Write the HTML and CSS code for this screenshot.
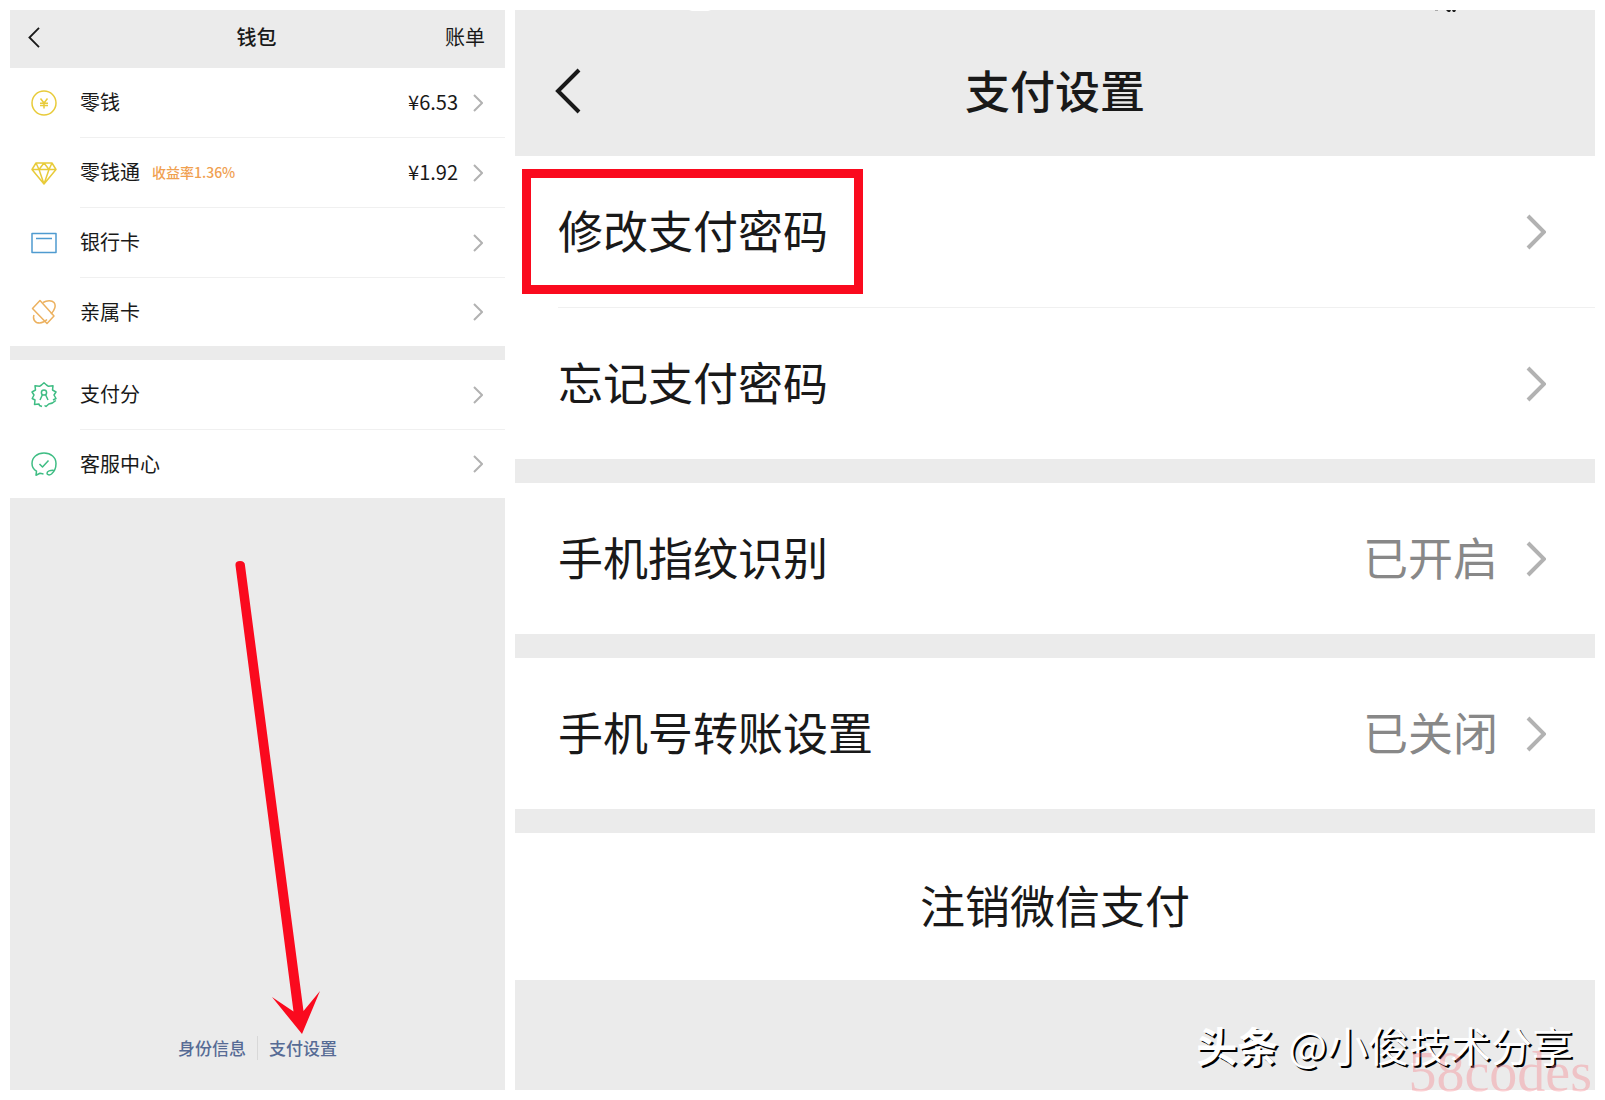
FILE: index.html
```html
<!doctype html>
<html lang="zh-CN">
  <head>
    <meta charset="UTF-8" />
    <meta name="viewport" content="width=device-width, initial-scale=1.0" />
    <title>支付设置</title>
    <link rel="stylesheet" href="styles.css">
  </head>
  <body>
    <svg class="defs" aria-hidden="true">
      <symbol id="chevron" viewBox="0 0 20 36">
        <path d="M2 2l16 16L2 34" fill="none" stroke="currentColor" stroke-width="4" />
      </symbol>
      <symbol id="back" viewBox="0 0 26 46">
        <path d="M24 2L3 23l21 21" fill="none" stroke="currentColor" stroke-width="4" />
      </symbol>
    </svg>

    <main class="screens">
      <section class="screen wallet">
        <header class="bar">
          <button class="back" aria-label="返回"><svg><use href="#back" /></svg></button>
          <h1>钱包</h1>
          <a class="bill" href="#bill">账单</a>
        </header>

        <ul class="group">
          <li>
            <a class="row" href="#balance">
              <svg class="icon yellow" viewBox="0 0 26 26">
                <circle cx="13" cy="13" r="12" />
                <path d="M9.500 8.500l3.500 4.500 3.500-4.500M9 13.200h8M9 15.500h8M13 13v5.500" />
              </svg>
              <span class="body">
                <span class="label">零钱</span>
                <span class="value">¥6.53</span>
                <svg class="chevron"><use href="#chevron" /></svg>
              </span>
            </a>
          </li>
          <li>
            <a class="row" href="#fund">
              <svg class="icon yellow" viewBox="0 0 26 26">
                <path d="M5 3h16l4 6.500L13 24 1 9.500zM1 9.500h24M8 9.500L13 24l5-14.500M5 3l3 6.500L13 3l5 6.500L21 3" />
              </svg>
              <span class="body">
                <span class="label">零钱通</span>
                <span class="rate">收益率1.36%</span>
                <span class="value">¥1.92</span>
                <svg class="chevron"><use href="#chevron" /></svg>
              </span>
            </a>
          </li>
          <li>
            <a class="row" href="#cards">
              <svg class="icon blue" viewBox="0 0 26 26">
                <path d="M1 3.500h24v19H1zM5 8.500h16" />
              </svg>
              <span class="body">
                <span class="label">银行卡</span>
                <svg class="chevron"><use href="#chevron" /></svg>
              </span>
            </a>
          </li>
          <li>
            <a class="row" href="#family">
              <svg class="icon orange" viewBox="0 0 26 26">
                <path d="M9 1.500L23 17l-7 7.500L1.500 9.500z" />
                <path d="M12 3.500c4-2.500 9-2.300 11 0 2.500 3 .5 8-3 11.500M3 16c-1 3 0 6 2.500 7.500 3 1 7 .5 10.500-3" />
              </svg>
              <span class="body">
                <span class="label">亲属卡</span>
                <svg class="chevron"><use href="#chevron" /></svg>
              </span>
            </a>
          </li>
        </ul>

        <ul class="group">
          <li>
            <a class="row" href="#score">
              <svg class="icon green" viewBox="0 0 26 26">
                <path d="M11 24.500l-2.500-1-.5-1.500-4.500.5.500-4.500-2.800-1.500L3 13 1 10l3.500-2L4 3.800l4.500.5L10.500 3 13 .8 15.500 3l2 1.300 4.500-.5-.5 4.200 3.500 2-2 3 2 3.500-3 1.500" />
                <path d="M24.800 18.500c-2 2-4.500 3.300-7 3.500L15 24.500l-1.500-1" />
                <circle cx="13" cy="10.500" r="2.600" />
                <path d="M11.500 12.500l-2.500 5.500M14.500 12.500l2.500 5.500" />
              </svg>
              <span class="body">
                <span class="label">支付分</span>
                <svg class="chevron"><use href="#chevron" /></svg>
              </span>
            </a>
          </li>
          <li>
            <a class="row" href="#service">
              <svg class="icon green" viewBox="0 0 26 26">
                <path d="M12.500 23l-3.500-.7L5 24.200l.5-4C2.500 18.500 1 15.500 1 12.500 1 6.500 6 2 13 2s12 4.500 12 10.500c0 5-1.500 8-4.500 10.500-2 1.500-4.500 1-4.500-.8 0-2 3.500-3.200 6.500-3" />
                <path d="M8.500 13l3 3 6-6.500" />
              </svg>
              <span class="body">
                <span class="label">客服中心</span>
                <svg class="chevron"><use href="#chevron" /></svg>
              </span>
            </a>
          </li>
        </ul>

        <footer class="links">
          <a href="#identity">身份信息</a>
          <a href="#settings">支付设置</a>
          <!-- points at the settings link -->
          <svg class="arrow" viewBox="0 0 100 474" aria-hidden="true">
            <path d="M15.500 5.500Q15 1 20 1t5 4.500L83.500 451l16.500-20L82 474 52 437l21.500 14.500z" />
          </svg>
        </footer>
      </section>

      <section class="screen settings">
        <svg class="status" viewBox="0 0 770 2" aria-hidden="true">
          <path d="M2 0h22l-3 1H5z" fill="#fff" />
          <path d="M748 0h3v1h-3z" fill="#aaa" />
          <path d="M759 0h5l-1 2h-2zM765 0h4l-1 2h-2z" fill="#222" />
        </svg>
        <header class="bar">
          <button class="back" aria-label="返回"><svg><use href="#back" /></svg></button>
          <h2>支付设置</h2>
        </header>

        <ul class="group">
          <li>
            <a class="row" href="#change-password">
              <span class="body">
                <span class="label marked">修改支付密码</span>
                <svg class="chevron"><use href="#chevron" /></svg>
              </span>
            </a>
          </li>
          <li>
            <a class="row" href="#forgot-password">
              <span class="body">
                <span class="label">忘记支付密码</span>
                <svg class="chevron"><use href="#chevron" /></svg>
              </span>
            </a>
          </li>
        </ul>

        <ul class="group">
          <li>
            <a class="row" href="#fingerprint">
              <span class="body">
                <span class="label">手机指纹识别</span>
                <span class="value">已开启</span>
                <svg class="chevron"><use href="#chevron" /></svg>
              </span>
            </a>
          </li>
        </ul>

        <ul class="group">
          <li>
            <a class="row" href="#transfer">
              <span class="body">
                <span class="label">手机号转账设置</span>
                <span class="value">已关闭</span>
                <svg class="chevron"><use href="#chevron" /></svg>
              </span>
            </a>
          </li>
        </ul>

        <button class="close-account">注销微信支付</button>

        <p class="credit"><b>头条</b><span>@小俊技术分享</span></p>
        <p class="site">58codes</p>
      </section>
    </main>
  </body>
</html>
```

FILE: styles.css
```css
:root {
  --gray: #ebebeb;
  --line: #f0f0f0;
  --text: #191919;
  --muted: #888;
  --chevron: #b2b2b2;
  --link: #576b95;
  --red: #fa0a1e;
}

* {
  box-sizing: border-box;
}

body {
  margin: 0;
  background: #fff;
  color: var(--text);
  font-family: 'Noto Sans CJK SC', sans-serif;
}

h1,
h2,
p,
ul {
  margin: 0;
  padding: 0;
}

ul {
  list-style: none;
}

a {
  color: inherit;
  text-decoration: none;
}

button {
  padding: 0;
  border: none;
  background: none;
  color: inherit;
  font: inherit;
  cursor: pointer;
}

.defs {
  display: none;
}

.screens {
  display: grid;
  grid-template-columns: 11fr 24fr;
  gap: 10px;
  min-height: 100vh;
  padding: 10px;
}

.screen {
  position: relative;
  display: flex;
  flex-direction: column;
  background: var(--gray);
}

.bar {
  display: grid;
  grid-template-columns: 1fr auto 1fr;
  align-items: center;
}

.bar h1,
.bar h2 {
  font-size: inherit;
  font-weight: 500;
}

.back {
  justify-self: start;
}

.back svg {
  display: block;
  width: 100%;
  height: 100%;
}

.group {
  background: #fff;
}

.row {
  display: flex;
  align-items: stretch;
}

.body {
  flex: 1;
  display: flex;
  align-items: center;
}

.group li:not(:last-child) .body {
  border-bottom: 1px solid var(--line);
}

.label,
.value,
.rate {
  padding-bottom: 2px;
}

.chevron {
  flex: none;
  color: var(--chevron);
  margin-left: auto;
}

.value {
  margin-left: auto;
}

/* Wallet */
.wallet {
  font-size: 20px;
}

.wallet .bar {
  height: 58px;
  padding: 0 20px 4px 18px;
}

.wallet .bar h1,
.bill {
  padding-bottom: 2px;
}

.wallet .back {
  width: 12px;
  height: 21px;
}

.bill {
  justify-self: end;
}

.wallet .group + .group {
  margin-top: 14px;
}

.wallet .row {
  height: 70px;
  padding-left: 21px;
}

.wallet li:last-child .row {
  height: 68px;
}

.wallet .body {
  padding-right: 22px;
}

.wallet .chevron {
  width: 10px;
  height: 18px;
}

.wallet .value + .chevron {
  margin-left: 15px;
}

.icon {
  align-self: center;
  width: 26px;
  height: 26px;
  margin-right: 23px;
  fill: none;
  stroke: currentColor;
  stroke-width: 1.5;
  stroke-linejoin: round;
}

.yellow {
  color: #e8cb3a;
}

.blue {
  color: #4f9bd0;
}

.orange {
  color: #ecb15f;
}

.green {
  color: #3fbd84;
}

.rate {
  margin-left: 12px;
  color: #f0a050;
  font-size: 14px;
  font-weight: 500;
}

.links {
  position: relative;
  display: flex;
  justify-content: center;
  margin-top: auto;
  padding-bottom: 30px;
  color: var(--link);
  font-size: 17px;
  font-weight: 500;
  line-height: 24px;
}

.links a {
  padding: 0 11px;
}

.links a + a {
  border-left: 1px solid #d8d8d8;
}

.arrow {
  position: absolute;
  bottom: 56px;
  left: calc(50% - 38px);
  width: 100px;
  height: 474px;
  fill: var(--red);
  pointer-events: none;
}

/* Payment settings */
.settings {
  font-size: 45px;
}

.settings .bar {
  height: 146px;
  padding: 16px 40px 0;
}

.settings .bar h2 {
  padding-bottom: 4px;
}

.settings .back {
  width: 26px;
  height: 46px;
}

.settings .group + .group {
  margin-top: 24px;
}

.settings .row {
  height: 151px;
  padding-left: 43px;
}

.settings li:first-child:not(:last-child) .row {
  height: 152px;
}

.settings .label,
.settings .value {
  padding-bottom: 4px;
}

.settings .body {
  padding-right: 49px;
}

.settings .value {
  color: var(--muted);
}

.settings .chevron {
  width: 20px;
  height: 36px;
}

.settings .value + .chevron {
  margin-left: 28px;
}

.marked {
  position: relative;
}

.marked::after {
  content: '';
  position: absolute;
  inset: -28px -35px -28px -36px;
  border: 9px solid var(--red);
}

.close-account {
  height: 147px;
  margin-top: 24px;
  padding-bottom: 4px;
  background: #fff;
}

/* leftovers of the system status bar */
.status {
  position: absolute;
  top: 0;
  right: 138px;
  width: 770px;
  height: 2px;
}

.credit {
  position: absolute;
  right: 22px;
  bottom: 16px;
  display: flex;
  gap: 10px;
  font-size: 41px;
  line-height: 60px;
  color: #fff;
  text-shadow: 2px 2px 0 #000;
}

.site {
  position: absolute;
  right: 3px;
  bottom: -12px;
  color: rgba(245, 120, 130, 0.35);
  font-family: 'Liberation Serif', serif;
  font-size: 56px;
  line-height: 60px;
}
```
